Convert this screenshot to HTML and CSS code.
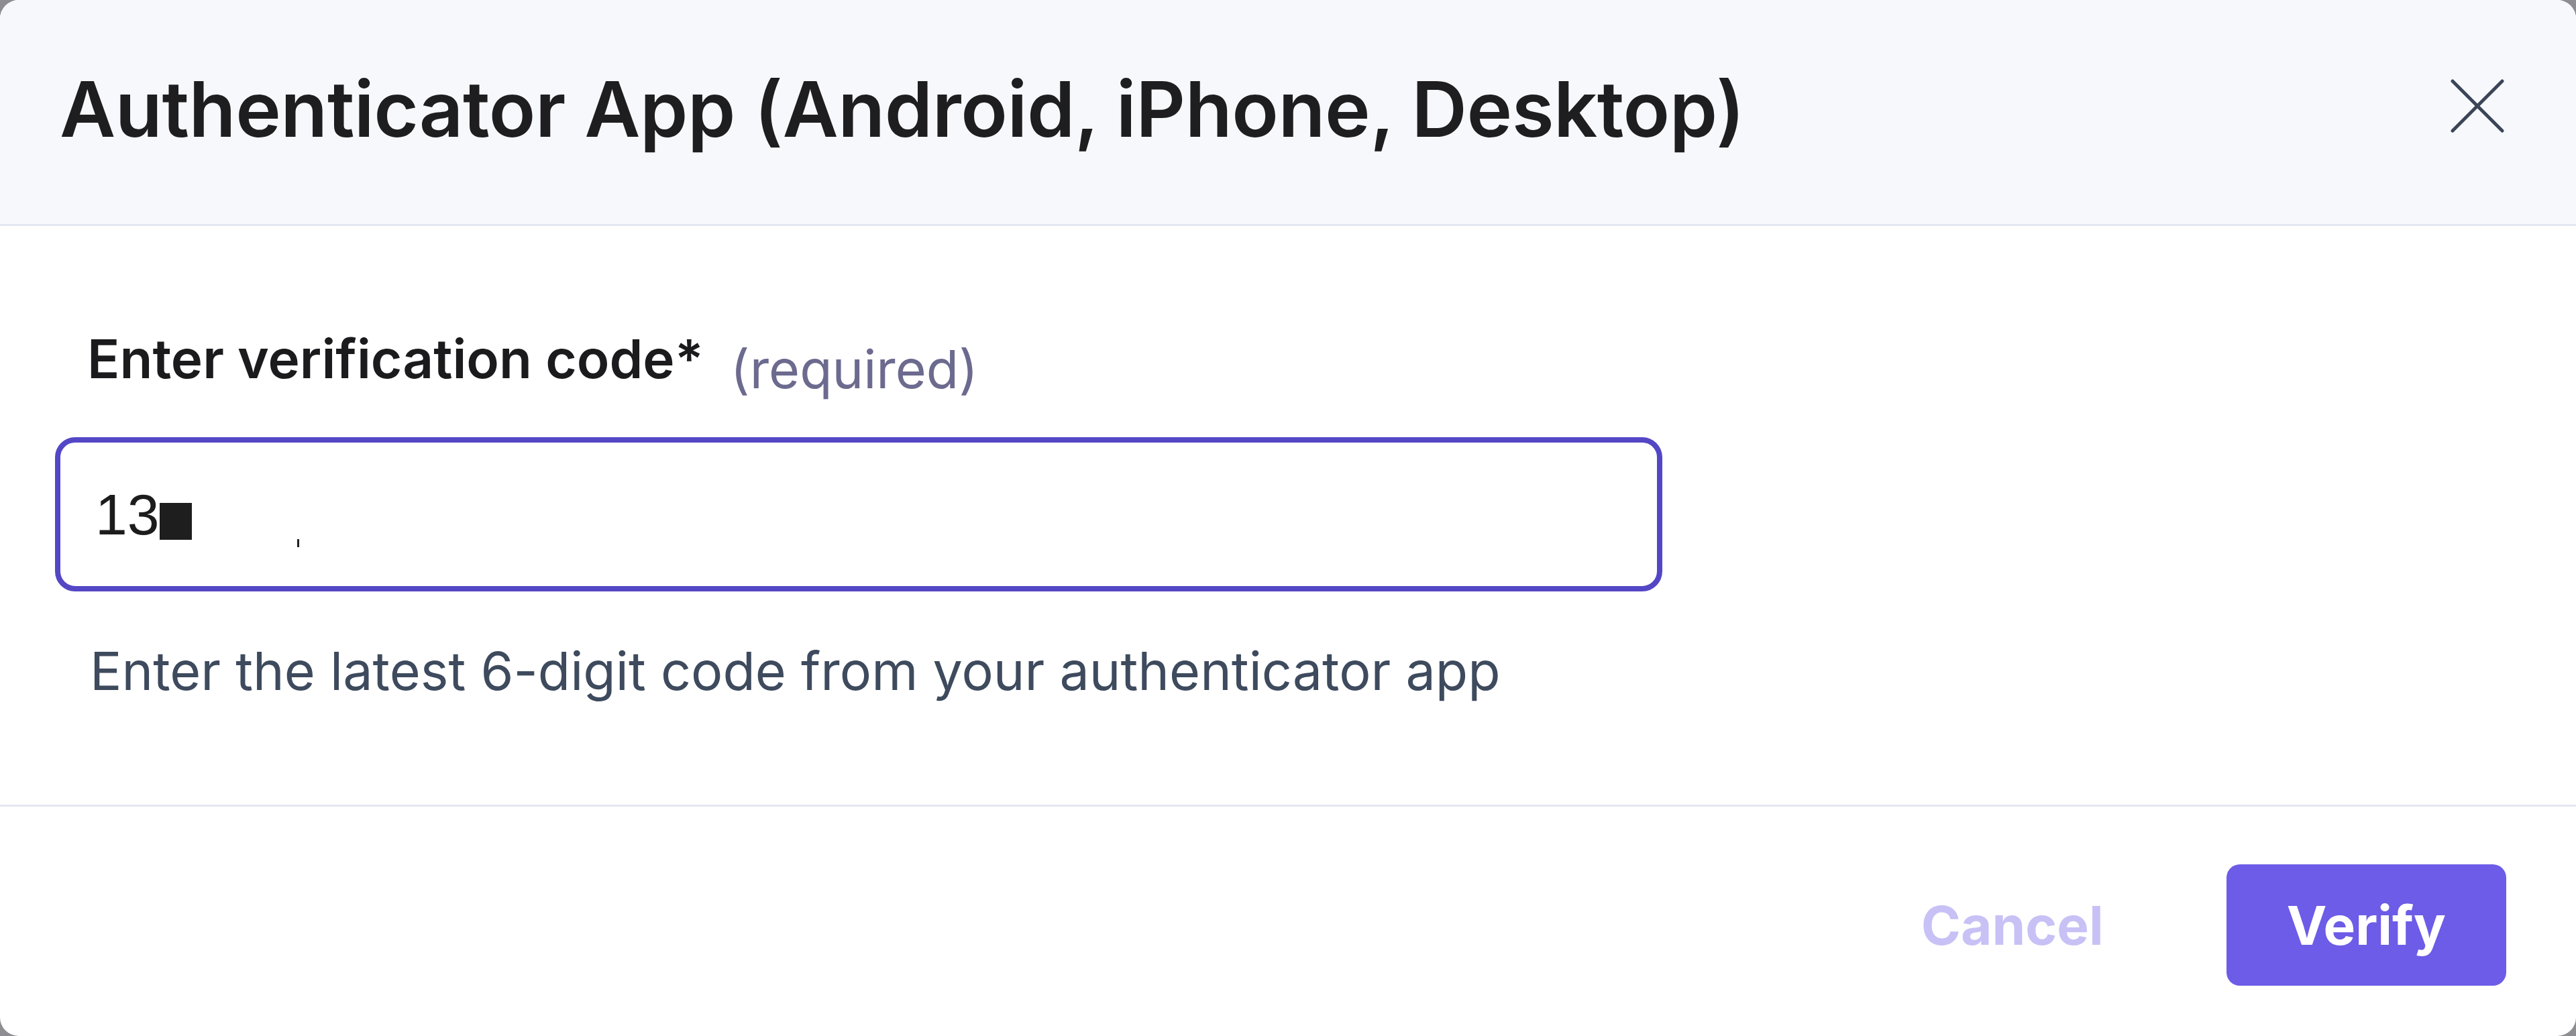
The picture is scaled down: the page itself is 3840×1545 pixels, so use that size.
FILE: index.html
```html
<!DOCTYPE html>
<html lang="en">
<head>
<meta charset="utf-8">
<title>Authenticator App</title>
<link rel="stylesheet" href="styles.css">
</head>
<body>
<div class="modal">
  <header class="modal-header">
    <h1 class="modal-title">Authenticator App (Android, iPhone, Desktop)</h1>
    <button class="close-btn" aria-label="Close">
      <svg width="80" height="80" viewBox="0 0 80 80" fill="none" stroke="#3b4558" stroke-width="5" stroke-linecap="round">
        <path d="M3 3 L77 77"/>
        <path d="M77 3 L3 77"/>
      </svg>
    </button>
  </header>
  <section class="modal-body">
    <div class="label-row">
      <span class="label">Enter verification code*</span>
      <span class="required">(required)</span>
    </div>
    <div class="code-input">
      <span class="code-text">13</span><span class="redact"></span><span class="tick"></span>
    </div>
    <p class="help">Enter the latest 6-digit code from your authenticator app</p>
  </section>
  <footer class="modal-footer">
    <button class="btn btn-cancel">Cancel</button>
    <button class="btn btn-verify">Verify</button>
  </footer>
</div>
</body>
</html>
```
FILE: styles.css
```css
* { box-sizing: border-box; }
html, body { margin: 0; padding: 0; }
body {
  width: 3840px;
  height: 1545px;
  background: #8e8e92;
  font-family: "Inter", "Liberation Sans", sans-serif;
  overflow: hidden;
}
.modal {
  width: 3840px;
  height: 1545px;
  background: #ffffff;
  border-radius: 28px;
  overflow: hidden;
  display: flex;
  flex-direction: column;
}
.modal-header {
  height: 337px;
  flex: none;
  background: #f7f8fc;
  border-bottom: 3px solid #e4e7f1;
  display: flex;
  align-items: center;
  justify-content: space-between;
  padding: 0 107px 8px 89px;
}
.modal-title {
  margin: 0;
  font-size: 114.5px;
  font-weight: 600;
  color: #1e1e20;
  line-height: 1.2;
  letter-spacing: -0.5px;
}
.close-btn {
  border: 0;
  background: transparent;
  padding: 0;
  width: 80px;
  height: 80px;
  margin-bottom: 10px;
  display: block;
}
.close-btn svg { display: block; }
.modal-body {
  flex: none;
  padding: 150px 82px 152px 82px;
  border-bottom: 3px solid #e4e7f1;
}
.label-row {
  display: flex;
  align-items: flex-start;
  gap: 40px;
  padding-left: 48px;
  height: 96px;
}
.label {
  font-size: 80px;
  font-weight: 600;
  line-height: 96px;
  color: #1b1b1d;
}
.required {
  font-size: 79px;
  line-height: 96px;
  padding-top: 15px;
  color: #6c6a8e;
}
.code-input {
  margin-top: 69px;
  width: 2396px;
  height: 230px;
  border: 8px solid #5447c6;
  border-radius: 30px;
  display: flex;
  align-items: center;
  padding-left: 52px;
  font-family: "Liberation Sans", "Inter", sans-serif;
  font-size: 86px;
  color: #1c1c1c;
}
.code-text { line-height: 1; }
.redact {
  display: inline-block;
  width: 48px;
  height: 55px;
  background: #1e1e1e;
  margin-left: 0;
  margin-top: 20px;
}
.tick {
  display: inline-block;
  width: 3px;
  height: 12px;
  background: #222;
  margin-left: 157px;
  margin-top: 86px;
}
.help {
  margin: 70px 0 0 0;
  padding-left: 52px;
  font-size: 79px;
  line-height: 96px;
  color: #3e4a5d;
}
.modal-footer {
  flex: 1;
  display: flex;
  justify-content: flex-end;
  align-items: flex-start;
  padding: 86px 104px 0 0;
  gap: 93px;
}
.btn {
  border: 0;
  height: 181px;
  padding: 0 90px;
  font-family: "Inter", "Liberation Sans", sans-serif;
  font-size: 80px;
  font-weight: 700;
  border-radius: 20px;
}
.btn-cancel {
  background: transparent;
  color: #c8c1f6;
}
.btn-verify {
  background: #6c5ce7;
  color: #ffffff;
}
```
